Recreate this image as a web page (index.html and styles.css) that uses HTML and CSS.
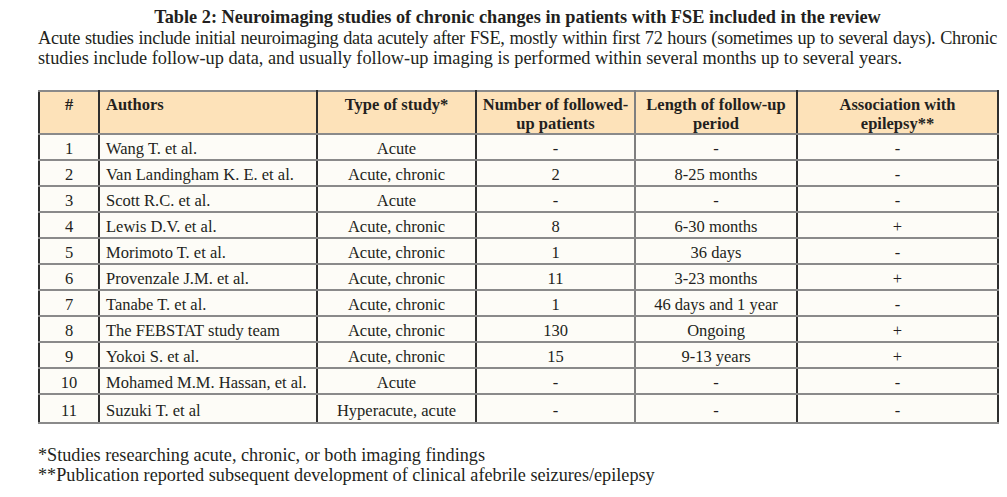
FILE: index.html
```html
<!DOCTYPE html>
<html>
<head>
<meta charset="utf-8">
<link rel="stylesheet" href="styles.css">
</head>
<body>
<div class="page">
  <h1 class="title">Table 2: Neuroimaging studies of chronic changes in patients with FSE included in the review</h1>
  <p class="intro">Acute studies include initial neuroimaging data acutely after FSE, mostly within first 72 hours (sometimes up to several days). Chronic studies include follow-up data, and usually follow-up imaging is performed within several months up to several years.</p>
  <table class="data">
    <colgroup>
      <col class="c1"><col class="c2"><col class="c3"><col class="c4"><col class="c5"><col class="c6">
    </colgroup>
    <thead>
      <tr>
        <th>#</th>
        <th class="left">Authors</th>
        <th>Type of study*</th>
        <th class="gray">Number of followed-<br>up patients</th>
        <th>Length of follow-up<br>period</th>
        <th>Association with<br>epilepsy**</th>
      </tr>
    </thead>
    <tbody>
      <tr><td>1</td><td class="left">Wang T. et al.</td><td>Acute</td><td class="gray">-</td><td>-</td><td>-</td></tr>
      <tr><td>2</td><td class="left">Van Landingham K. E. et al.</td><td>Acute, chronic</td><td class="gray">2</td><td>8-25 months</td><td>-</td></tr>
      <tr><td>3</td><td class="left">Scott R.C. et al.</td><td>Acute</td><td class="gray">-</td><td>-</td><td>-</td></tr>
      <tr><td>4</td><td class="left">Lewis D.V. et al.</td><td>Acute, chronic</td><td class="gray">8</td><td>6-30 months</td><td>+</td></tr>
      <tr><td>5</td><td class="left">Morimoto T. et al.</td><td>Acute, chronic</td><td class="gray">1</td><td>36 days</td><td>-</td></tr>
      <tr><td>6</td><td class="left">Provenzale J.M. et al.</td><td>Acute, chronic</td><td class="gray">11</td><td>3-23 months</td><td>+</td></tr>
      <tr><td>7</td><td class="left">Tanabe T. et al.</td><td>Acute, chronic</td><td class="gray">1</td><td>46 days and 1 year</td><td>-</td></tr>
      <tr><td>8</td><td class="left">The FEBSTAT study team</td><td>Acute, chronic</td><td class="gray">130</td><td>Ongoing</td><td>+</td></tr>
      <tr><td>9</td><td class="left">Yokoi S. et al.</td><td>Acute, chronic</td><td class="gray">15</td><td>9-13 years</td><td>+</td></tr>
      <tr><td>10</td><td class="left">Mohamed M.M. Hassan, et al.</td><td>Acute</td><td class="gray">-</td><td>-</td><td>-</td></tr>
      <tr class="last"><td>11</td><td class="left">Suzuki T. et al</td><td>Hyperacute, acute</td><td class="gray">-</td><td>-</td><td>-</td></tr>
    </tbody>
  </table>
  <div class="notes">
    <p>*Studies researching acute, chronic, or both imaging findings</p>
    <p>**Publication reported subsequent development of clinical afebrile seizures/epilepsy</p>
  </div>
</div>
</body>
</html>
```

FILE: styles.css
```css
html, body {
  margin: 0;
  padding: 0;
  background: #ffffff;
}
body {
  font-family: "Liberation Serif", "Times New Roman", serif;
  color: #231f20;
}
.page {
  padding: 7px 10px 0 38px;
}
.title {
  margin: 0;
  font-size: 18.3px;
  line-height: 20px;
  font-weight: bold;
  text-align: center;
}
.intro {
  margin: 0;
  font-size: 18.3px;
  line-height: 20px;
  text-align: justify;
  padding-top: 1px;
}
.intro::first-line {
  letter-spacing: -0.3px;
}
.data {
  margin-top: 22px;
  width: 959px;
  border-collapse: collapse;
  table-layout: fixed;
  font-size: 16.5px;
  border: 2px solid #333333;
}
.c1 { width: 60px; }
.c2 { width: 218px; }
.c3 { width: 159px; }
.c4 { width: 159px; }
.c5 { width: 162px; }
.c6 { width: 201px; }
.data th {
  background: #fde2b9;
  font-weight: bold;
  vertical-align: top;
  text-align: center;
  white-space: nowrap;
  line-height: 19px;
  padding: 3px 2px 0 2px;
  height: 41px;
  box-sizing: border-box;
}
.data th.left {
  padding-left: 6px;
}
.data td {
  background: #fdfcf7;
  text-align: center;
  line-height: 18px;
  height: 25px;
  padding: 5px 6px 1px 6px;
  box-sizing: border-box;
}
.data tr.last td {
  height: 29px;
  padding-top: 6px;
}
.data th, .data td {
  border-top: 2px solid #8a8a8a;
  border-bottom: 2px solid #8a8a8a;
  border-left: 2px solid #2e2e2e;
  border-right: 2px solid #2e2e2e;
}
.data th.gray, .data td.gray {
  border-right-color: #7f7f7f;
}
.data .left {
  text-align: left;
}
.notes {
  margin-top: 21px;
  font-size: 18.2px;
  line-height: 20px;
}
.notes p {
  margin: 0;
}
```
